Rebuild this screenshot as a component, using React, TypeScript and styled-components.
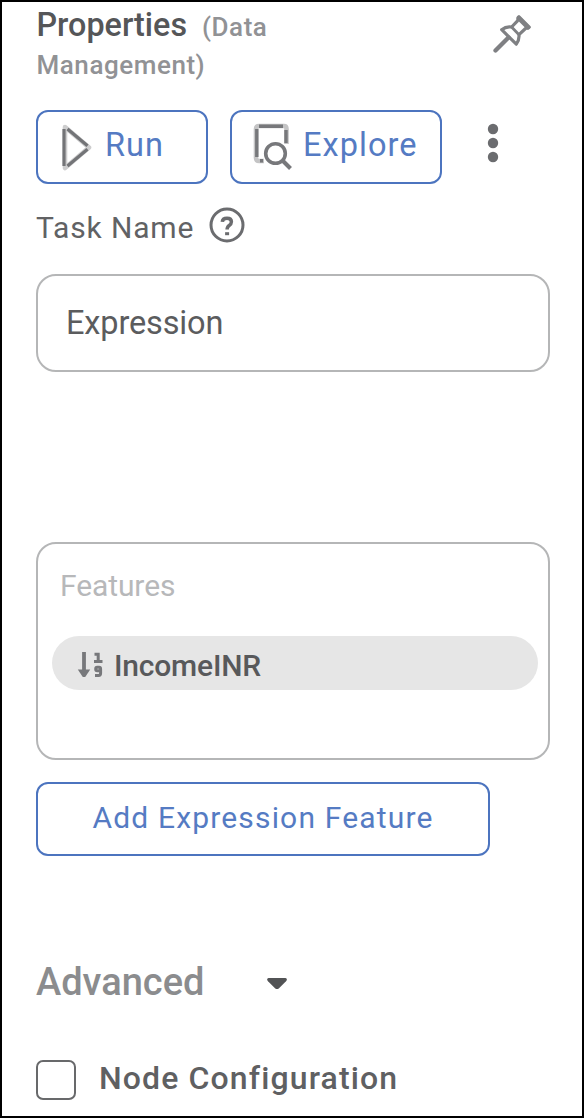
import React from "react";
import styled, { createGlobalStyle } from "styled-components";

const GlobalStyle = createGlobalStyle`
  *, *::before, *::after { box-sizing: border-box; }
  body { margin: 0; background: #fff; font-family: Roboto, "Liberation Sans", sans-serif; }
  svg { display: block; flex: none; }
`;

const Panel = styled.main`
  display: flex;
  flex-direction: column;
  width: 584px;
  height: 1118px;
  padding: 3px 32px 0 34px;
  border: 2px solid #000;
  background: #fff;
  overflow: hidden;
`;

const Header = styled.header`
  display: flex;
  justify-content: space-between;
  align-items: flex-start;
  height: 103px;
`;

const Title = styled.h1`
  display: flex;
  flex-wrap: wrap;
  align-items: baseline;
  column-gap: 15px;
  width: 280px;
  margin: 1px 0 0;
  padding-left: 0.5px;
  font-size: 32.3px;
  line-height: 38px;
  font-weight: 500;
  color: #555658;
`;

const Category = styled.span`
  font-size: 26px;
  letter-spacing: 0.55px;
  color: #919295;
`;

const PinButton = styled.span`
  margin: 9px 18px 0 0;
`;

const Toolbar = styled.div`
  display: flex;
  align-items: center;
  height: 74px;
  margin-top: 2px;
`;

const OutlineButton = styled.button<{ $width: number; $size?: number; $gap?: number; $lift?: number }>`
  display: flex;
  align-items: center;
  flex: none;
  width: ${(p) => p.$width}px;
  height: 74px;
  padding: 0 0 ${(p) => p.$lift ?? 4}px;
  border: 2px solid #4c74bf;
  border-radius: 12px;
  background: #fff;
  color: #557bc3;
  font-family: inherit;
  font-size: ${(p) => p.$size ?? 32.5}px;
  line-height: 40px;
  letter-spacing: ${(p) => p.$gap ?? 1.05}px;
  & + & { margin-left: 22px; }
`;

const ActionLabel = styled.span<{ $offset: number }>`
  margin-left: ${(p) => p.$offset}px;
`;

const ActionIcon = styled.span<{ $left: number; $top: number }>`
  margin: ${(p) => p.$top}px 0 0 ${(p) => p.$left}px;
`;

const MoreButton = styled.span`
  margin: -8px 0 0 43px;
`;

const LabelRow = styled.div`
  display: flex;
  align-items: center;
  gap: 15px;
  height: 44px;
  margin-top: 21px;
  font-size: 30px;
  line-height: 44px;
  letter-spacing: 0.85px;
  color: #616264;
`;

const LabelText = styled.span`
  margin-top: 2px;
`;

const HelpIcon = styled.span`
  margin-top: -4px;
`;

const TextField = styled.div`
  flex: none;
  width: 514px;
  height: 98px;
  margin-top: 25px;
  padding-left: 28px;
  border: 2px solid #b5b6b7;
  border-radius: 20px;
  font-size: 32.5px;
  line-height: 94px;
  letter-spacing: -0.15px;
  color: #5b5c5e;
`;

const FeatureBox = styled.section`
  flex: none;
  width: 514px;
  height: 218px;
  margin-top: 170px;
  padding: 22px 10px 0 14px;
  border: 2px solid #b5b6b7;
  border-radius: 20px;
`;

const BoxLabel = styled.div`
  padding-left: 8px;
  font-size: 30px;
  line-height: 40px;
  letter-spacing: -0.1px;
  color: #b7b8ba;
`;

const Chip = styled.div`
  display: flex;
  align-items: center;
  gap: 10px;
  height: 54px;
  margin-top: 30px;
  padding: 4px 0 0 25px;
  border-radius: 27px;
  background: #e6e6e6;
  font-size: 30px;
  line-height: 40px;
  font-weight: 500;
  letter-spacing: -0.2px;
  color: #58595b;
`;

const ChipText = styled.span`
  margin-top: 2px;
`;

const AddRow = styled.div`
  margin-top: 22px;
  ${OutlineButton} { justify-content: center; }
`;

const AdvancedRow = styled.div`
  display: flex;
  align-items: center;
  gap: 62px;
  height: 48px;
  margin-top: 102px;
  font-size: 38px;
  line-height: 48px;
  font-weight: 500;
  color: #8b8c8e;
`;

const Caret = styled.span`
  margin-top: 4px;
`;

const CheckRow = styled.label`
  display: flex;
  align-items: center;
  gap: 23px;
  height: 40px;
  margin-top: 54px;
  font-size: 32px;
  line-height: 36px;
  font-weight: 500;
  letter-spacing: 1.12px;
  color: #5f6062;
`;

const CheckBox = styled.span`
  flex: none;
  width: 40px;
  height: 40px;
  border: 2px solid #68696b;
  border-radius: 7px;
`;

const CheckLabel = styled.span`
  margin-top: -4px;
`;

const PinIcon = () => (
  <svg width="39" height="40" viewBox="0 0 39 40" fill="none" stroke="#7f8083" strokeWidth="3.2" strokeLinejoin="round" strokeLinecap="round">
    <path d="M26 2.8 36.2 13.2 32.5 14.5 26 20.7Q26.5 25.5 23.3 30.2L8.7 15.7Q13.2 12 18.6 13L24.5 6.8Z" />
    <path d="M18.6 13 26 20.7" strokeWidth="2.8" />
    <path d="M25.5 4 35 13.5" strokeWidth="4.5" />
    <path d="M15.5 23.5 2.5 36.5" strokeWidth="4.3" />
  </svg>
);

const RunIcon = () => (
  <svg width="32" height="48" viewBox="0 0 32 48" fill="none" strokeLinejoin="round">
    <path d="M5 4 29 24.5 5 45Z" stroke="#cdcdce" strokeWidth="4.6" />
    <path d="M4 6V43M7.5 6 27.5 22.8M27.5 26.2 7.5 43" stroke="#737477" strokeWidth="3.2" />
  </svg>
);

const ExploreIcon = () => (
  <svg width="40" height="48" viewBox="0 0 40 48" fill="none" stroke="#77787b">
    <path d="M11 39H6Q3 39 3 36V7Q3 4 6 4H31Q33.5 4 33.5 7V22" stroke="#c4c4c5" strokeWidth="4.6" />
    <path d="M10 38.7H7M3.8 35V7M6 4.3H30M33 8V21" strokeWidth="3.4" />
    <circle cx="22.5" cy="31.5" r="9.8" strokeWidth="3.6" fill="#fff" />
    <path d="m29.5 38.5 8 8" strokeWidth="4" />
  </svg>
);

const MoreIcon = () => (
  <svg width="16" height="42" viewBox="0 0 16 42" fill="#6b6c6f">
    <circle cx="8" cy="7" r="5.2" />
    <circle cx="8" cy="21" r="5.2" />
    <circle cx="8" cy="35" r="5.2" />
  </svg>
);

const QuestionIcon = () => (
  <svg width="36" height="36" viewBox="0 0 36 36" fill="none" stroke="#6b6c6f">
    <circle cx="18" cy="18" r="16" strokeWidth="3" />
    <path d="M13.3 14.8Q13.5 11.2 18 11.2 22.4 11.2 22.4 14.8 22.4 17 20.2 18.4 18.1 19.8 18.1 22.6" strokeWidth="3.5" />
    <path d="M16.1 25.2h4v3h-4z" fill="#6b6c6f" stroke="none" />
  </svg>
);

const SortIcon = () => (
  <svg width="27" height="28" viewBox="0 0 27 28" fill="none" stroke="#77787b">
    <path d="M7 1V22" strokeWidth="3.8" />
    <path d="M.8 18.5H13.2L8.2 26H5.8Z" fill="#77787b" stroke="none" />
    <path d="M17.5 3.2h3.7V11M17 10.6h8.5" strokeWidth="3" />
    <path d="M23 19.8h-2.8q-1.5 0-1.5-1.8t1.5-1.8H22q1.6 0 1.6 1.8v4q0 2.6-2 2.6h-3.6" strokeWidth="3" />
  </svg>
);

const CaretIcon = () => (
  <svg width="22" height="14" viewBox="0 0 22 14" fill="#525355">
    <path d="M2.5 1h17Q22 2 20 4.2L13 11.2Q11 13 9 11.2L2 4.2Q0 2 2.5 1Z" />
  </svg>
);

export default function App() {
  return (
    <>
      <GlobalStyle />
      <Panel>
        <Header>
          <Title>
            <span>Properties</span>
            <Category>(Data</Category>
            <Category>Management)</Category>
          </Title>
          <PinButton><PinIcon /></PinButton>
        </Header>
        <Toolbar>
          <OutlineButton $width={172}>
            <ActionIcon $left={22} $top={4}><RunIcon /></ActionIcon>
            <ActionLabel $offset={13}>Run</ActionLabel>
          </OutlineButton>
          <OutlineButton $width={212}>
            <ActionIcon $left={21} $top={2}><ExploreIcon /></ActionIcon>
            <ActionLabel $offset={10}>Explore</ActionLabel>
          </OutlineButton>
          <MoreButton><MoreIcon /></MoreButton>
        </Toolbar>
        <LabelRow>
          <LabelText>Task Name</LabelText>
          <HelpIcon><QuestionIcon /></HelpIcon>
        </LabelRow>
        <TextField>Expression</TextField>
        <FeatureBox>
          <BoxLabel>Features</BoxLabel>
          <Chip><SortIcon /><ChipText>IncomeINR</ChipText></Chip>
        </FeatureBox>
        <AddRow>
          <OutlineButton $width={454} $size={30} $gap={1.17} $lift={2}>Add Expression Feature</OutlineButton>
        </AddRow>
        <AdvancedRow>Advanced<Caret><CaretIcon /></Caret></AdvancedRow>
        <CheckRow>
          <CheckBox />
          <CheckLabel>Node Configuration</CheckLabel>
        </CheckRow>
      </Panel>
    </>
  );
}
